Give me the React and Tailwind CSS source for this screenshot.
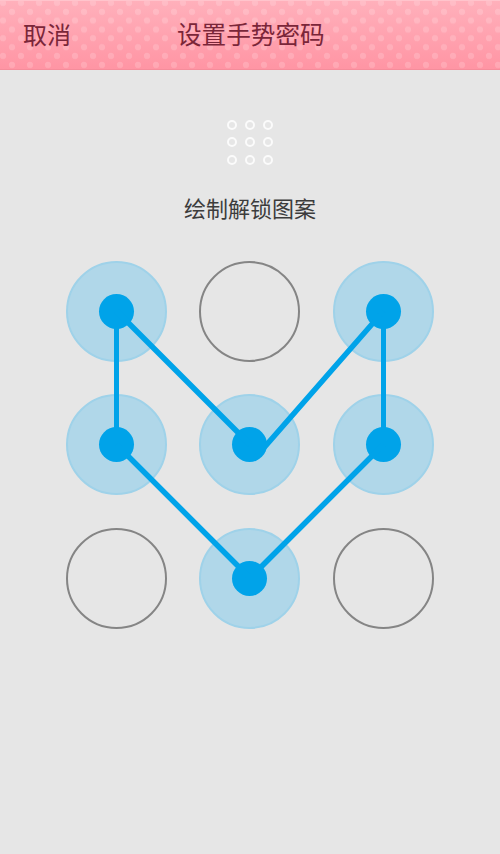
const cells = [true, false, true, true, true, true, false, true, false];

function Cell({ on }) {
  if (!on) {
    return <div className="h-[101px] w-[101px] rounded-full border-2 border-[#858585]" />;
  }
  return (
    <div className="flex h-[101px] w-[101px] items-center justify-center rounded-full border-2 border-[#9fd2e9] bg-[#b0d7e9]">
      <div className="h-[35px] w-[35px] rounded-full bg-[#00a3e9]" />
    </div>
  );
}

export default function App() {
  return (
    <div className="flex min-h-[854px] w-[500px] flex-col bg-[#e6e6e6] font-['Roboto','Noto_Sans_CJK_SC',sans-serif]">
      {/* header */}
      <div className="relative h-[70px] border-t border-b border-t-[#ffc4cc] border-b-[#f58d9b] bg-[linear-gradient(#ffb0bb,#ff95a4)]">
        <div className="absolute inset-0 bg-[radial-gradient(circle,rgba(255,255,255,0.17)_2.8px,transparent_3.6px),radial-gradient(circle,rgba(255,255,255,0.17)_2.8px,transparent_3.6px)] bg-[length:18px_17.7px] bg-[position:-6px_-7px,3px_2px]" />
        <div className="relative flex h-full items-center pt-[2px] text-[24.6px] text-[#7a2639]">
          <span className="ml-[23px] text-[24px]">取消</span>
          <span className="ml-[106px]">设置手势密码</span>
        </div>
      </div>

      {/* small pattern icon */}
      <div className="mt-[49.5px] grid w-[46px] grid-cols-3 gap-[7.7px] self-center">
        {cells.map((_, i) => (
          <div key={i} className="h-[10px] w-[10px] rounded-full border-2 border-[#fbfbfb]" />
        ))}
      </div>

      <p className="mt-[29px] text-center text-[22px] leading-[32px] text-[#3c3c3c]">绘制解锁图案</p>

      {/* pattern */}
      <div className="relative mx-auto mt-[35.1px] w-[368px]">
        <div className="grid grid-cols-3 gap-x-[32.4px] gap-y-[32.4px]">
          {cells.map((on, i) => (
            <Cell key={i} on={on} />
          ))}
        </div>
        <svg className="absolute left-0 top-0" width="368" height="368" fill="none" stroke="#00a3e9">
          <path strokeWidth="5" d="M50.5 50V183.5M317.5 183.5V50" />
          <path strokeWidth="5.5" d="M50.5 183.5L184 317L317.5 183.5M317.5 50L189 197M184 183.5L50.5 50" />
        </svg>
      </div>
    </div>
  );
}
